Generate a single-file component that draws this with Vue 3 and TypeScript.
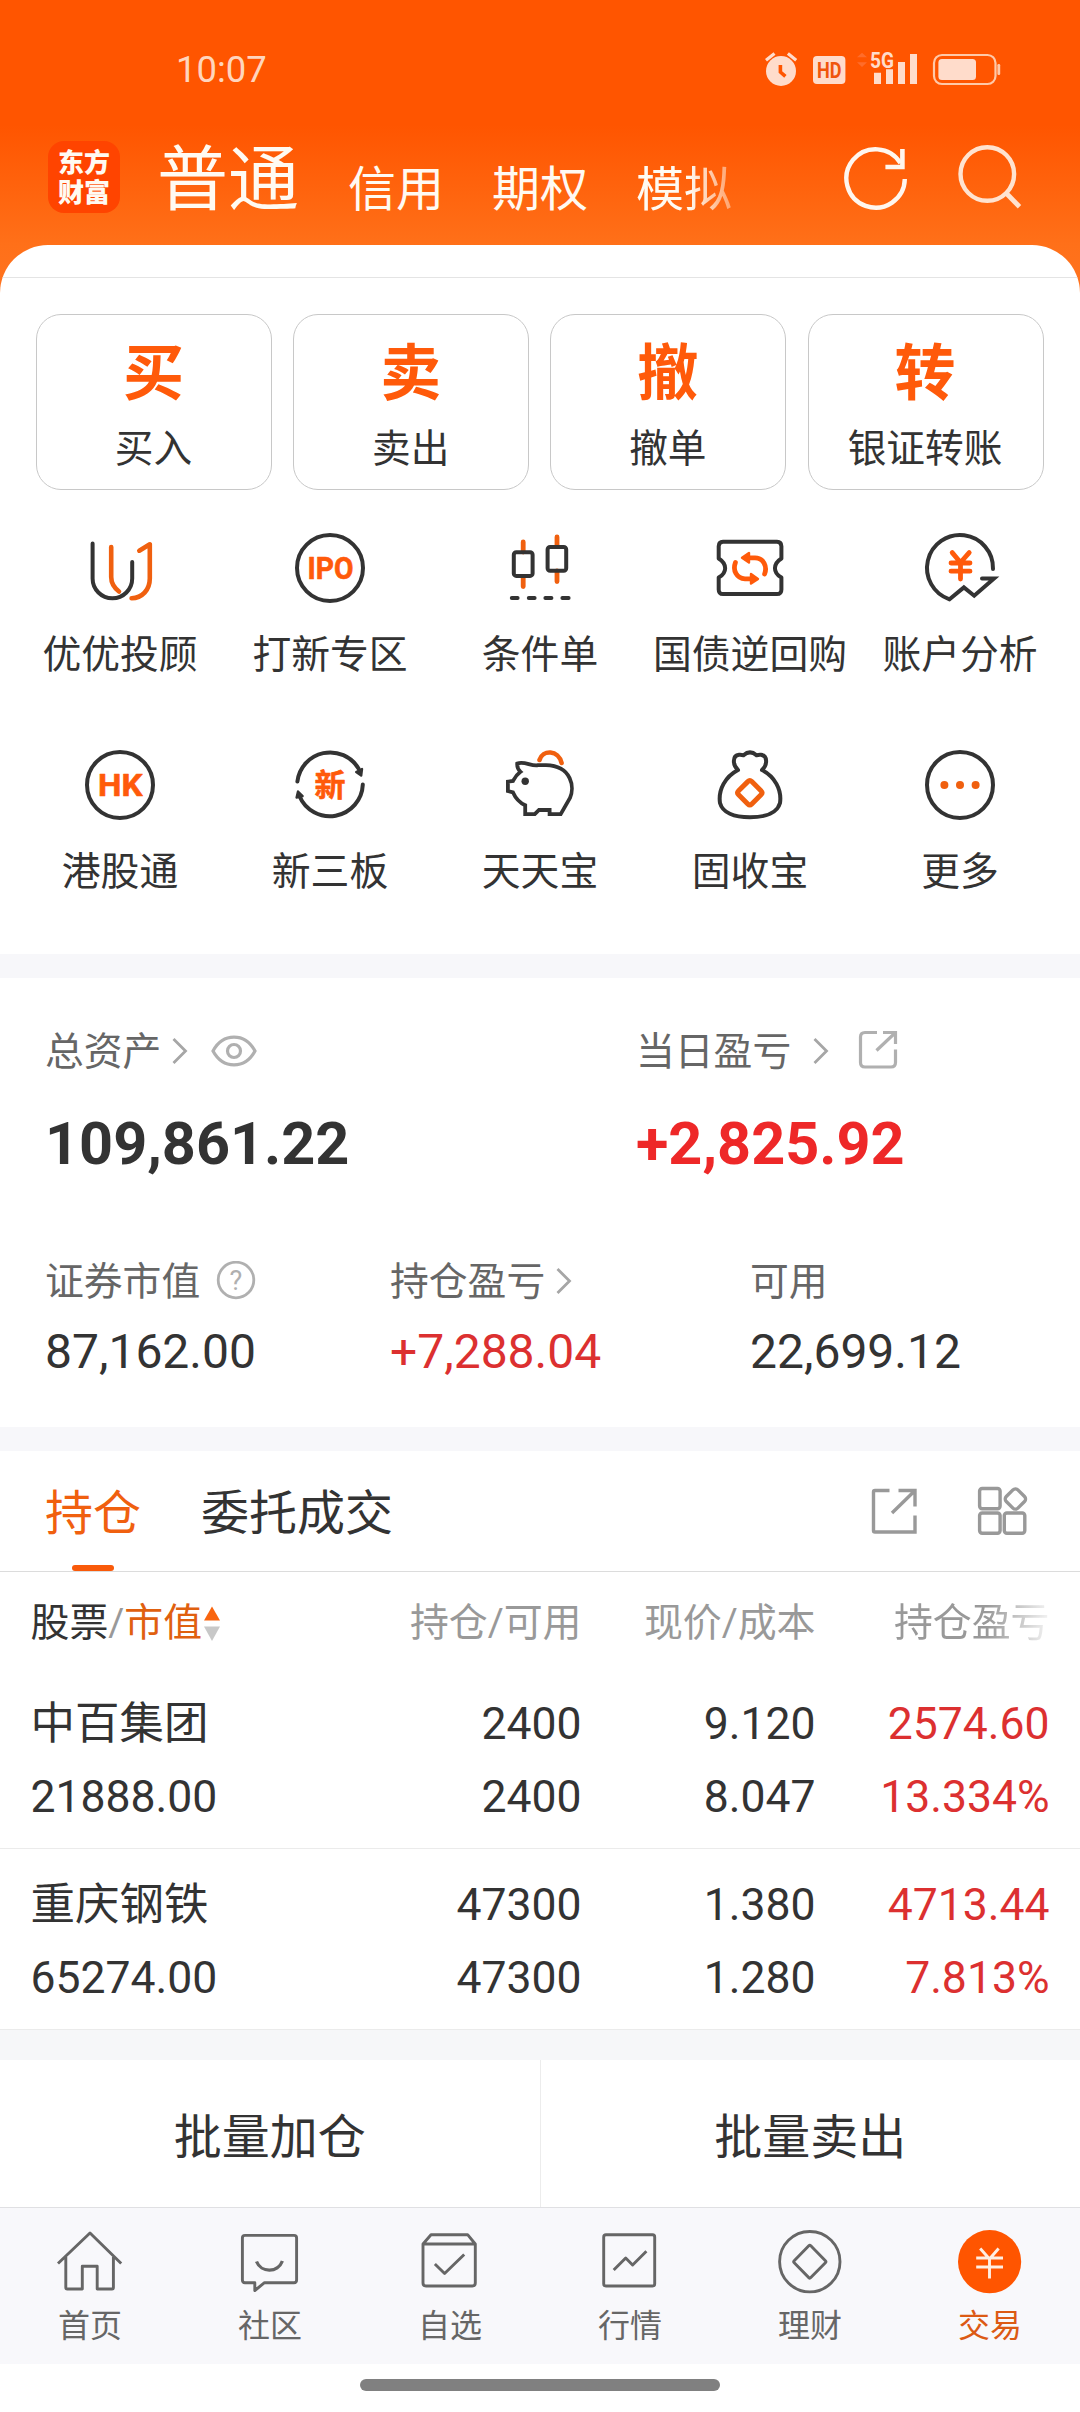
<script setup lang="ts">
interface Holding {
  name: string
  value: string
  held: string
  usable: string
  price: string
  cost: string
  profit: string
  rate: string
}

const accounts: string[] = ['信用', '期权']

const actions: { mark: string; label: string }[] = [
  { mark: '买', label: '买入' },
  { mark: '卖', label: '卖出' },
  { mark: '撤', label: '撤单' },
  { mark: '转', label: '银证转账' },
]

const services: { id: string; label: string }[] = [
  { id: 'advisor', label: '优优投顾' },
  { id: 'ipo', label: '打新专区' },
  { id: 'condition', label: '条件单' },
  { id: 'repo', label: '国债逆回购' },
  { id: 'analysis', label: '账户分析' },
  { id: 'hk', label: '港股通' },
  { id: 'neeq', label: '新三板' },
  { id: 'pig', label: '天天宝' },
  { id: 'bag', label: '固收宝' },
  { id: 'more', label: '更多' },
]

const holdings: Holding[] = [
  { name: '中百集团', value: '21888.00', held: '2400', usable: '2400', price: '9.120', cost: '8.047', profit: '2574.60', rate: '13.334%' },
  { name: '重庆钢铁', value: '65274.00', held: '47300', usable: '47300', price: '1.380', cost: '1.280', profit: '4713.44', rate: '7.813%' },
]

const tabs: { id: string; label: string }[] = [
  { id: 'home', label: '首页' },
  { id: 'community', label: '社区' },
  { id: 'watch', label: '自选' },
  { id: 'market', label: '行情' },
  { id: 'wealth', label: '理财' },
  { id: 'trade', label: '交易' },
]
</script>

<template>
  <div class="page">
    <div class="status">
      <span class="clock">10:07</span>
      <svg class="status-icons" width="245" height="50" viewBox="0 0 245 50">
        <circle cx="21" cy="26" r="15" fill="#ffdccb" />
        <path d="M6 15.3 14.5 8.6M27.9 8.6 36.2 15.3" stroke="#ffdccb" stroke-width="3.2" fill="none" />
        <path d="M20.4 20V27L25.4 31.4" stroke="#ff5500" stroke-width="3.6" fill="none" />
        <rect x="53" y="11" width="32.4" height="28" rx="4" fill="#ffdccb" />
        <text x="57" y="33.2" font-size="22" font-weight="700" textLength="24.5" lengthAdjust="spacingAndGlyphs" fill="#f0560c">HD</text>
        <path d="M97 12.3 102 7.7 107 12.3ZM97 17.3 102 22 107 17.3Z" fill="#ff6c2a" />
        <text x="110" y="22.8" font-size="21.5" font-weight="700" textLength="24" lengthAdjust="spacingAndGlyphs" fill="#ffdccb">5G</text>
        <path d="M114 27.7h7V39h-7zM126 24.3h7V39h-7zM138 17h7V39h-7zM150 9h7V39h-7z" fill="#ffdccb" />
        <rect x="174" y="10" width="61.5" height="29" rx="8" fill="none" stroke="#ffc9a8" stroke-width="2.2" />
        <rect x="178.4" y="14" width="37.6" height="21" rx="3.5" fill="#ffdccb" />
        <rect x="237.4" y="19" width="2.8" height="11" rx="1.2" fill="#ffc9a8" />
      </svg>
    </div>

    <header class="nav">
      <div class="logo"><span>东方</span><span>财富</span></div>
      <span class="account-main">普通</span>
      <span v-for="a in accounts" :key="a" class="account">{{ a }}</span>
      <span class="account fade">模拟</span>
      <svg class="refresh" width="72" height="72" viewBox="0 0 72 72" fill="none" stroke="#fff6ee">
        <path d="M65.8 38A29.2 29.2 0 1 1 61.5 22.2" stroke-width="4.4" />
        <path d="M63.4 8V26H46.4" stroke-width="4.6" />
      </svg>
      <svg class="search" width="72" height="72" viewBox="0 0 72 72" fill="none" stroke="#ffe3d0" stroke-width="4.4">
        <circle cx="36.3" cy="33" r="26.8" />
        <path d="M54.8 51.7 68.5 65.7" stroke-width="4.8" />
      </svg>
    </header>

    <main class="panel">
      <div class="hairline"></div>

      <section class="actions">
        <div v-for="a in actions" :key="a.label" class="action">
          <b>{{ a.mark }}</b>
          <span>{{ a.label }}</span>
        </div>
      </section>

      <section class="services">
        <div v-for="s in services" :key="s.id" class="service">
          <svg width="80" height="80" viewBox="0 0 80 80" fill="none" stroke="#333" stroke-width="4" stroke-linecap="round" stroke-linejoin="round">
            <template v-if="s.id === 'advisor'">
              <path d="M12.6 15.5V50.5A19.8 19.8 0 0 0 52.2 50.5V34" />
              <path d="M31.2 19V49C31.2 55.5 34.5 60 39 63.5M59.3 22.7 69.8 16.3V50.5C69.8 62 62 70.2 51.6 70.2" stroke="#f0600f" stroke-width="4.6" />
            </template>
            <template v-else-if="s.id === 'ipo'">
              <circle cx="40" cy="40" r="33" />
              <text class="glyph" x="17.6" y="50.8" font-size="31" textLength="46" lengthAdjust="spacingAndGlyphs">IPO</text>
            </template>
            <template v-else-if="s.id === 'condition'">
              <path d="M23.2 14V24M23.2 48.5V58.5M57 9V18.5M57 43V53.5" stroke="#f0600f" stroke-width="4.8" />
              <rect x="13.8" y="24.3" width="18.8" height="23.6" rx="2.5" />
              <rect x="47.6" y="18.9" width="18.6" height="23.8" rx="2.5" />
              <path d="M11.8 70H17.6M28.8 70H34.6M45.4 70H51.4M62.4 70H68.6" />
            </template>
            <template v-else-if="s.id === 'repo'">
              <path d="M13 13.7H67Q71.4 13.7 71.4 18.2V30.5C62.8 36 62.8 44.6 71.4 49.6V61.4Q71.4 66 67 66H13Q8.7 66 8.7 61.4V49.6C17.3 44.6 17.3 36 8.7 30.5V18.2Q8.7 13.7 13 13.7Z" />
              <g stroke="#ff5a0a" stroke-width="4.8">
                <path d="M38 29.8H45C53.5 30 57.5 38.5 54.6 46" />
                <path d="M42 50.8H35C26.5 50.6 22.5 42.1 25.4 34.6" />
              </g>
              <path d="M32 29.7 39 25V34.6ZM48 50.9 41 55.6V46Z" fill="#ff5a0a" stroke="#ff5a0a" stroke-width="2.4" />
            </template>
            <template v-else-if="s.id === 'analysis'">
              <path d="M73 41A33 33 0 1 0 29.5 71.3L43.9 59.4 54.2 67.7 74 50.6H62" stroke-linejoin="miter" />
              <path d="M32.2 24.6 40.5 34.5 49.2 24.6M31 35H50M31 43.2H50M40.5 35V51" stroke="#ff5a0a" stroke-width="4.8" />
            </template>
            <template v-else-if="s.id === 'hk'">
              <circle cx="40" cy="40" r="33" />
              <text class="glyph" x="18" y="50.8" font-size="31" textLength="44.5" lengthAdjust="spacingAndGlyphs">HK</text>
            </template>
            <template v-else-if="s.id === 'neeq'">
              <path d="M7.4 36.5A33 33 0 0 1 68.5 23.5M72.8 39.6A33 33 0 0 1 9.4 51" />
              <path d="M66.2 27 72 24 71.2 30.6ZM8 46.5 12.6 51.2 6.6 52.6Z" fill="#333" stroke-width="2.4" />
              <text class="glyph" x="24.5" y="51" font-size="31">新</text>
            </template>
            <template v-else-if="s.id === 'pig'">
              <path d="M39.5 15C42.5 4.5 58.5 4.5 61.6 18" stroke="#f0600f" stroke-width="4.6" />
              <path d="M7.9 36.6V46L13 47.4C15.5 53 19.5 57.5 25.2 60.2V69.2H34.8L39 65H49.6V69.2H60.7L70 53C74.5 43 72.5 21 46 20.2H38C31 21.5 24.5 15.7 17.2 18.5C17 22 18 24.5 20.5 26.8C17.5 29 15 32 13 35.9Z" stroke-linejoin="miter" stroke-width="3.8" />
              <circle cx="25.2" cy="36.3" r="3.7" fill="#333" stroke="none" />
            </template>
            <template v-else-if="s.id === 'bag'">
              <path d="M28 25C15.5 31.5 8 44.5 10 58C12.5 67.5 24 72.3 40 72.3C56 72.3 67.5 67.5 70 58C72 44.5 64.5 31.5 52 25C57.5 20 57.8 10.5 51 9.8Q49 9.6 46.5 10.2Q40 4.5 33.5 10.2Q31 9.6 29 9.8C22.2 10.5 22.5 20 28 25" />
              <path d="M37.8 36.6Q39.8 34.6 41.8 36.6L51 45.7Q53 47.7 51 49.7L41.8 58.9Q39.8 60.9 37.8 58.9L28.6 49.7Q26.6 47.7 28.6 45.7Z" stroke="#f0600f" stroke-width="5" />
            </template>
            <template v-else>
              <circle cx="40" cy="40" r="33" />
              <g fill="#f0600f" stroke="none">
                <circle cx="24.4" cy="40" r="4" />
                <circle cx="40" cy="40" r="4" />
                <circle cx="55.6" cy="40" r="4" />
              </g>
            </template>
          </svg>
          <span>{{ s.label }}</span>
        </div>
      </section>

      <div class="band"></div>

      <section class="assets">
        <div class="totals">
          <div class="total">
            <div class="caption">
              <span>总资产</span>
              <svg class="chev" width="16" height="28" viewBox="0 0 16 28"><path d="M1.5 2 13.5 14 1.5 26" /></svg>
              <svg class="eye" width="46" height="34" viewBox="0 0 46 34" fill="none" stroke="#b0b0b0" stroke-width="3.2">
                <path d="M2 17C12 -1.5 34 -1.5 44 17C34 35.5 12 35.5 2 17Z" />
                <circle cx="23" cy="17" r="6.5" />
              </svg>
            </div>
            <div class="amount">109,861.22</div>
          </div>
          <div class="total">
            <div class="caption">
              <span>当日盈亏</span>
              <svg class="chev far" width="16" height="28" viewBox="0 0 16 28"><path d="M1.5 2 13.5 14 1.5 26" /></svg>
              <svg class="open" width="40" height="42" viewBox="0 0 40 42" fill="none" stroke="#b0b0b0" stroke-width="3.2">
                <path d="M19 2.5H7Q2.5 2.5 2.5 7V32.5Q2.5 37 7 37H33Q37.5 37 37.5 32.5V19.5M18.5 20.5 37 3M25 2.5H37.5V14" />
              </svg>
            </div>
            <div class="amount up">+2,825.92</div>
          </div>
        </div>
        <div class="details">
          <div class="detail">
            <div class="caption">
              <span>证券市值</span>
              <svg class="help" width="40" height="40" viewBox="0 0 40 40">
                <circle cx="20" cy="19" r="17.8" fill="none" stroke="#b0b0b0" stroke-width="2.8" />
                <text x="20" y="28.5" font-size="27" text-anchor="middle" fill="#b0b0b0">?</text>
              </svg>
            </div>
            <div class="figure">87,162.00</div>
          </div>
          <div class="detail">
            <div class="caption">
              <span>持仓盈亏</span>
              <svg class="chev" width="16" height="28" viewBox="0 0 16 28"><path d="M1.5 2 13.5 14 1.5 26" /></svg>
            </div>
            <div class="figure up">+7,288.04</div>
          </div>
          <div class="detail">
            <div class="caption"><span>可用</span></div>
            <div class="figure">22,699.12</div>
          </div>
        </div>
      </section>

      <div class="band"></div>

      <section class="book-tabs">
        <span class="book-tab active">持仓</span>
        <span class="book-tab">委托成交</span>
        <svg class="book-open" width="50" height="50" viewBox="0 0 50 50" fill="none" stroke="#999" stroke-width="3.4">
          <path d="M20.5 4.5H6Q4.5 4.5 4.5 6V44.5Q4.5 46 6 46H46V29.5M23 27 45 5.5M29.5 4.5H46V20.5" />
        </svg>
        <svg class="book-grid" width="52" height="52" viewBox="0 0 52 52" fill="none" stroke="#999" stroke-width="3.4">
          <rect x="2.6" y="3.5" width="20.5" height="20.2" rx="2.6" />
          <rect x="2.6" y="28" width="20.5" height="20.2" rx="2.6" />
          <rect x="27.3" y="28" width="20.5" height="20.2" rx="2.6" />
          <rect x="30.2" y="5.8" width="16.4" height="16.4" rx="3.5" transform="rotate(45 38.4 14)" />
        </svg>
      </section>

      <section class="table">
        <div class="row head">
          <div class="cell first">
            <i>股票</i>/<em>市值</em>
            <svg width="18" height="36" viewBox="0 0 18 36">
              <path d="M9 0.5 17 14.5H1Z" fill="#f9650f" />
              <path d="M9 35 17 20.5H1Z" fill="#c8c8c8" />
            </svg>
          </div>
          <div class="cell c2">持仓/可用</div>
          <div class="cell c3">现价/成本</div>
          <div class="cell c4">持仓盈亏</div>
        </div>
        <div v-for="h in holdings" :key="h.name" class="row">
          <div class="cell first"><span>{{ h.name }}</span><span>{{ h.value }}</span></div>
          <div class="cell c2"><span>{{ h.held }}</span><span>{{ h.usable }}</span></div>
          <div class="cell c3"><span>{{ h.price }}</span><span>{{ h.cost }}</span></div>
          <div class="cell c4 up"><span>{{ h.profit }}</span><span>{{ h.rate }}</span></div>
        </div>
      </section>

      <div class="band tall"></div>

      <section class="batch">
        <div>批量加仓</div>
        <div>批量卖出</div>
      </section>
    </main>

    <nav class="tabbar">
      <div v-for="t in tabs" :key="t.id" class="tab" :class="{ on: t.id === 'trade' }">
        <svg width="72" height="72" viewBox="0 0 72 72" fill="none" stroke="#666" stroke-width="2.9" stroke-linejoin="round">
          <path v-if="t.id === 'home'" d="M4 37.5 36 7 67.2 37.5M11.8 31V61.5Q11.8 63 13.3 63H28.3V40.3H43.2V63H58Q59.4 63 59.4 61.5V31" />
          <template v-else-if="t.id === 'community'">
            <path d="M11 9.4H60Q62.6 9.4 62.6 12V54Q62.6 56.7 60 56.7H30.5L20.8 64.5V56.7H11Q8.4 56.7 8.4 54V12Q8.4 9.4 11 9.4Z" />
            <path d="M22.5 35.5C27 47 44 47 48.4 35" stroke-width="3.3" />
          </template>
          <path v-else-if="t.id === 'watch'" d="M9 18 17 8.7H53.6L61.3 18V57Q61.3 60 58.3 60H12Q9 60 9 57ZM9 18H61.3M20.9 38 30.6 47.5 50.2 28.5" />
          <path v-else-if="t.id === 'market'" d="M12 8.7H58.5Q60.7 8.7 60.7 11V57.7Q60.7 60 58.5 60H12Q9.7 60 9.7 57.7V11Q9.7 8.7 12 8.7ZM19.7 44 31.7 32 38.6 39 52.4 25.3" />
          <template v-else-if="t.id === 'wealth'">
            <circle cx="35.8" cy="35.7" r="30.2" />
            <path d="M34.8 19.8Q35.8 18.8 36.8 19.8L51.4 34.7Q52.4 35.7 51.4 36.7L36.8 51.6Q35.8 52.6 34.8 51.6L20.2 36.7Q19.2 35.7 20.2 34.7Z" />
          </template>
          <template v-else>
            <circle cx="35.6" cy="35.7" r="31.6" fill="#ff5500" stroke="none" />
            <path d="M26.2 22.5 35.5 33 44.6 22.5M22.2 32H49M22.2 41H49M35.5 32V52.6" stroke="#ffeee2" stroke-linejoin="miter" />
          </template>
        </svg>
        <span>{{ t.label }}</span>
      </div>
    </nav>
    <div class="gesture"><div></div></div>
  </div>
</template>

<style>
body {
  margin: 0;
  background: #fff;
}
</style>

<style scoped>
.page {
  width: 1080px;
  height: 2412px;
  overflow: hidden;
  display: flex;
  flex-direction: column;
  font-family: Roboto, "Noto Sans CJK SC", sans-serif;
  color: #333;
  background: linear-gradient(to bottom, #ff5500 0, #ff5500 125px, #ff7019 245px, #ff7420 300px, #fff 300px);
}
.page > * {
  flex: none;
}
.up {
  color: #dc3030;
}

/* status bar */
.status {
  height: 65px;
  padding: 45px 75px 0 176px;
  display: flex;
  justify-content: space-between;
}
.clock {
  font-size: 36.4px;
  line-height: 50px;
  color: #ffd5bd;
}

/* account switcher */
.nav {
  height: 72px;
  padding: 31px 57px 32px 48px;
  display: flex;
  align-items: flex-end;
  color: #fffaf2;
}
.logo {
  width: 72px;
  height: 72px;
  box-sizing: border-box;
  padding-top: 7px;
  border-radius: 16px;
  background: #ff4400;
  display: flex;
  flex-direction: column;
  align-items: center;
  font-size: 26px;
  line-height: 30px;
  font-weight: 900;
}
.account-main {
  margin-left: 37px;
  margin-right: 1px;
  margin-bottom: -3px;
  font-size: 71px;
  line-height: 72px;
}
.account {
  margin-left: 48px;
  margin-bottom: -1px;
  font-size: 48px;
  line-height: 48px;
}
.fade {
  -webkit-mask-image: linear-gradient(to right, #000 55%, rgba(0, 0, 0, 0.4) 100%);
  mask-image: linear-gradient(to right, #000 55%, rgba(0, 0, 0, 0.4) 100%);
}
.refresh {
  margin-left: auto;
}
.search {
  margin-left: 40px;
}

.panel {
  height: 1962px;
  border-radius: 48px 48px 0 0;
  background: #fff;
  overflow: hidden;
}
.hairline {
  margin-top: 32px;
  height: 1px;
  background: #e4e4e4;
}

/* quick actions */
.actions {
  margin: 36px 36.5px 0 36px;
  height: 176px;
  display: flex;
  gap: 21.3px;
}
.action {
  flex: 1;
  box-sizing: border-box;
  padding-right: 1px;
  border: 1px solid #c8c8c8;
  border-radius: 25px;
  display: flex;
  flex-direction: column;
  align-items: center;
}
.action b {
  margin-top: 28px;
  font-size: 61px;
  line-height: 62px;
  color: #ff5a0a;
}
.action span {
  margin-top: 21px;
  font-size: 38.7px;
  line-height: 46px;
}

/* services */
.services {
  height: 464px;
  padding: 0 15px;
  display: grid;
  grid-template-columns: repeat(5, 210px);
  grid-template-rows: 217px 217px;
}
.service {
  padding-top: 38px;
  display: flex;
  flex-direction: column;
  align-items: center;
}
.service span {
  margin-top: 23px;
  font-size: 38.8px;
  line-height: 48px;
  white-space: nowrap;
}
.glyph {
  font-weight: 700;
  fill: #ff5a0a;
  stroke: #ff5a0a;
  stroke-width: 0.6px;
}

.band {
  height: 24px;
  background: #f7f7fa;
}
.band.tall {
  height: 30px;
  background: #f6f7f9;
}

/* assets */
.assets {
  height: 449px;
}
.totals,
.details {
  display: flex;
  padding-left: 45px;
}
.totals {
  padding-top: 49px;
}
.total {
  flex: none;
  width: 591px;
}
.caption {
  height: 48px;
  display: flex;
  align-items: center;
  font-size: 38.8px;
  line-height: 48px;
  color: #666;
  white-space: nowrap;
}
.caption span {
  padding-top: 1px;
}
.chev {
  margin-left: 11px;
  fill: none;
  stroke: #a6a6a6;
  stroke-width: 2.8px;
}
.chev.far {
  margin-left: 22px;
}
.eye {
  margin-left: 23px;
}
.open {
  margin-left: 29px;
}
.help {
  margin-left: 16px;
}
.amount {
  margin-top: 37px;
  font-size: 59.4px;
  line-height: 64px;
  font-weight: 700;
}
.amount.up {
  color: #ee2828;
}
.details {
  padding-top: 81px;
}
.detail {
  flex: none;
  width: 345px;
}
.detail + .detail {
  width: 360px;
}
.figure {
  margin-top: 19px;
  font-size: 48px;
  line-height: 56px;
}

/* position book */
.book-tabs {
  height: 120px;
  padding: 0 51px 0 45px;
  display: flex;
  align-items: center;
  border-bottom: 1px solid #dcdcdc;
}
.book-tab {
  position: relative;
  height: 120px;
  font-size: 48px;
  line-height: 125px;
}
.book-tab + .book-tab {
  margin-left: 60px;
}
.active {
  color: #f0600f;
}
.active::after {
  content: "";
  position: absolute;
  left: 27px;
  bottom: 0;
  width: 42px;
  height: 6px;
  border-radius: 3px;
  background: #f95a0a;
}
.book-open {
  margin-left: auto;
}
.book-grid {
  margin-left: 58px;
}

.row {
  height: 180px;
  padding-left: 30.5px;
  display: flex;
  border-bottom: 1px solid #ebebeb;
  font-size: 44.5px;
  line-height: 73px;
}
.row:not(.head) .cell {
  padding-top: 20px;
}
.row.head {
  height: 96px;
  border: 0;
  font-size: 38.9px;
  line-height: 102px;
  color: #999;
}
.cell {
  flex: none;
  text-align: right;
}
.cell span {
  display: block;
}
.first {
  width: 250px;
  text-align: left;
}
.head .first {
  height: 102px;
  display: flex;
  align-items: center;
}
.head .first svg {
  margin: 1px 0 0 1px;
}
.head i {
  font-style: normal;
  color: #333;
}
.head em {
  font-style: normal;
  color: #e0600f;
}
.c2 {
  width: 301px;
}
.c3 {
  width: 234px;
}
.c4 {
  width: 234px;
}
.head .c4 {
  -webkit-mask-image: linear-gradient(to right, #000 73%, rgba(0, 0, 0, 0.1) 100%);
  mask-image: linear-gradient(to right, #000 73%, rgba(0, 0, 0, 0.1) 100%);
}

.batch {
  height: 147px;
  display: flex;
}
.batch div {
  flex: 1;
  box-sizing: border-box;
  text-align: center;
  font-size: 48px;
  line-height: 156px;
}
.batch div:first-child {
  border-right: 1px solid #ececec;
}

/* bottom navigation */
.tabbar {
  height: 156px;
  border-top: 1px solid #e0e0e3;
  background: #f8f8fb;
  display: flex;
}
.tab {
  flex: 1;
  padding-top: 18px;
  display: flex;
  flex-direction: column;
  align-items: center;
  font-size: 32px;
  color: #666;
}
.tab span {
  margin-top: 8px;
  line-height: 40px;
}
.tab.on {
  color: #dc5a14;
}
.gesture {
  height: 48px;
  padding-top: 15px;
  box-sizing: border-box;
  background: #fff;
}
.gesture div {
  width: 360px;
  height: 12px;
  margin: 0 auto;
  border-radius: 6px;
  background: #808080;
}
</style>
